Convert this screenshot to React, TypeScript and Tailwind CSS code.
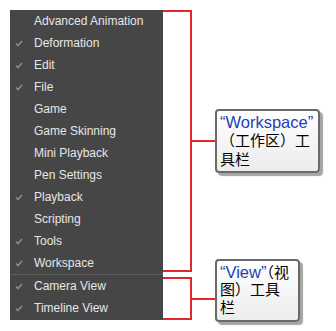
import React from 'react';

interface Item {
  label: string;
  checked: boolean;
}

const TOOLBARS: Item[] = [
  { label: 'Advanced Animation', checked: false },
  { label: 'Deformation', checked: true },
  { label: 'Edit', checked: true },
  { label: 'File', checked: true },
  { label: 'Game', checked: false },
  { label: 'Game Skinning', checked: false },
  { label: 'Mini Playback', checked: false },
  { label: 'Pen Settings', checked: false },
  { label: 'Playback', checked: true },
  { label: 'Scripting', checked: false },
  { label: 'Tools', checked: true },
  { label: 'Workspace', checked: true },
];

const VIEWS: Item[] = [
  { label: 'Camera View', checked: true },
  { label: 'Timeline View', checked: true },
];

const Check = () => (
  <svg width="8" height="7" viewBox="0 0 8 7" className="block">
    <polyline points="1,3.5 3,5.5 7,1" fill="none" stroke="#8c8c8c" strokeWidth="1.6" />
  </svg>
);

const MenuRow = ({ item }: { item: Item }) => (
  <div className="flex items-center h-[22px]">
    <div className="w-[24px] pl-[5px] flex items-center">{item.checked && <Check />}</div>
    <span className="text-[12px] text-[#e6e6e6] leading-none">{item.label}</span>
  </div>
);

// one annotation box; lines are given explicitly so they wrap as in the screenshot
const Callout = ({ className, lines }: { className: string; lines: React.ReactNode[] }) => (
  <div
    className={
      'absolute flex flex-col border-2 border-[#6a6a6a] rounded-[4px] bg-gradient-to-b from-white to-[#ececec] shadow-[3px_3px_1px_#a4a4a4] pl-[3px] pt-[2px] text-black ' +
      className
    }
    style={{ fontFamily: '"Liberation Sans", "Noto Sans CJK SC", sans-serif' }}
  >
    {lines.map((l, i) => (
      <div key={i} className="h-[18px] leading-[18px] whitespace-nowrap text-[15px]">
        {l}
      </div>
    ))}
  </div>
);

const Blue = ({ children }: { children: React.ReactNode }) => (
  <span className="text-[#1f3fb4] text-[16.5px]">{children}</span>
);

export default function App() {
  return (
    <div className="relative w-[336px] h-[331px] bg-white overflow-hidden">
      <div className="flex pt-[10px] pl-[10px]">
        <div className="w-[153px] bg-[#464646]" style={{ fontFamily: '"Liberation Sans", Arial, sans-serif' }}>
          {TOOLBARS.map((t) => (
            <MenuRow key={t.label} item={t} />
          ))}
          <div className="h-px bg-[#5e5e5e]" />
          {VIEWS.map((t) => (
            <MenuRow key={t.label} item={t} />
          ))}
        </div>

        {/* red brackets */}
        <div className="flex flex-col">
          <div className="flex items-center">
            <div className="w-[29px] h-[262px] border-y-2 border-r-2 border-[#e3262c]" />
            <div className="w-[23px] h-[2px] bg-[#e3262c]" />
          </div>
          <div className="flex items-center mt-[5px]">
            <div className="w-[29px] h-[43px] border-y-2 border-r-2 border-[#e3262c]" />
            <div className="w-[23px] h-[2px] bg-[#e3262c]" />
          </div>
        </div>
      </div>

      <Callout
        className="left-[215px] top-[109px] w-[105px] h-[64px] gap-px"
        lines={[<Blue>“Workspace”</Blue>, '（工作区）工', '具栏']}
      />
      <Callout
        className="left-[215px] top-[259px] w-[85px] h-[63px]"
        lines={[
          <>
            <Blue>“View”</Blue>（视
          </>,
          '图）工具',
          '栏',
        ]}
      />
    </div>
  );
}
